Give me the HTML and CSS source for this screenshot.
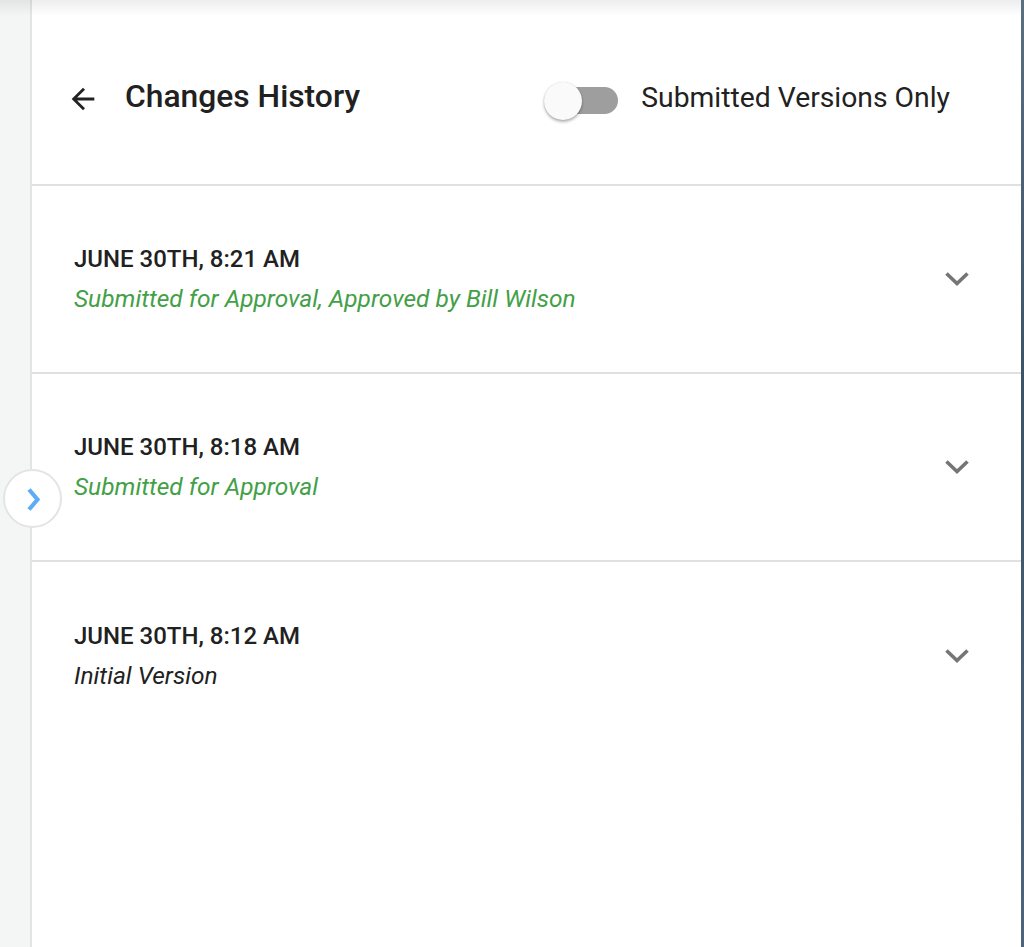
FILE: index.html
```html
<!DOCTYPE html>
<html>
<head>
<meta charset="utf-8">
<link rel="stylesheet" href="styles.css">
</head>
<body>
<div class="app">
  <aside class="rail"></aside>
  <main class="panel">
    <header class="head">
      <button class="back" aria-label="Back">
        <svg width="34" height="34" viewBox="0 0 24 24"><path d="M20 11H7.83l5.59-5.59L12 4l-8 8 8 8 1.41-1.41L7.83 13H20v-2z" fill="#222"/></svg>
      </button>
      <h1 class="title">Changes History</h1>
      <label class="toggle">
        <span class="track"><span class="thumb"></span></span>
        <span class="toggle-label">Submitted Versions Only</span>
      </label>
    </header>
    <ul class="list">
      <li class="item">
        <div class="info">
          <div class="date">JUNE 30TH, 8:21 AM</div>
          <div class="desc green">Submitted for Approval, Approved by Bill Wilson</div>
        </div>
        <svg class="chev" width="30" height="30" viewBox="0 0 30 30"><polyline points="4.5,9.5 15,19.5 25.5,9.5" fill="none" stroke="#757575" stroke-width="3.6"/></svg>
      </li>
      <li class="item">
        <div class="info">
          <div class="date">JUNE 30TH, 8:18 AM</div>
          <div class="desc green">Submitted for Approval</div>
        </div>
        <svg class="chev" width="30" height="30" viewBox="0 0 30 30"><polyline points="4.5,9.5 15,19.5 25.5,9.5" fill="none" stroke="#757575" stroke-width="3.6"/></svg>
      </li>
      <li class="item last">
        <div class="info">
          <div class="date">JUNE 30TH, 8:12 AM</div>
          <div class="desc">Initial Version</div>
        </div>
        <svg class="chev" width="30" height="30" viewBox="0 0 30 30"><polyline points="4.5,9.5 15,19.5 25.5,9.5" fill="none" stroke="#757575" stroke-width="3.6"/></svg>
      </li>
    </ul>
  </main>
  <div class="edge"></div>
  <button class="expand" aria-label="Expand">
    <svg width="30" height="30" viewBox="0 0 30 30"><polyline points="11,5.5 19.5,15.5 11,25.5" fill="none" stroke="#5eacf5" stroke-width="4.2"/></svg>
  </button>
  <div class="topshade"></div>
</div>
</body>
</html>
```

FILE: styles.css
```css
* { box-sizing: border-box; }
html, body { margin: 0; padding: 0; height: 100%; }
body {
  font-family: Roboto, "Liberation Sans", sans-serif;
  color: #212121;
  background: #fff;
}
.app {
  position: relative;
  display: flex;
  width: 1024px;
  height: 947px;
  overflow: hidden;
}
.rail {
  width: 32px;
  flex: none;
  background: #f4f6f5;
  border-right: 2px solid #e3e5e4;
}
.panel {
  flex: 1;
  background: #fff;
}
.edge {
  width: 3px;
  flex: none;
  background: linear-gradient(#5a6f80, #3c5366 40%, #4e6478);
}
.topshade {
  position: absolute;
  left: 0; right: 3px; top: 0;
  height: 16px;
  background: linear-gradient(rgba(0,0,0,0.07), rgba(0,0,0,0));
  pointer-events: none;
}
.head {
  height: 186px;
  display: flex;
  align-items: center;
  padding: 0 0 0 34px;
  border-bottom: 2px solid #e0e0e0;
}
.back {
  border: 0;
  background: none;
  padding: 0;
  width: 34px;
  height: 34px;
  margin-right: 25px;
  margin-top: 13px;
  cursor: pointer;
  flex: none;
}
.back svg { display: block; }
.title {
  margin: 8px 0 0 0;
  font-size: 31.8px;
  line-height: 38px;
  font-weight: 500;
  flex: 1;
}
.toggle {
  display: flex;
  align-items: center;
  margin-right: 71px;
  margin-top: 17px;
}
.track {
  position: relative;
  width: 70px;
  height: 27px;
  border-radius: 14px;
  background: #9e9e9e;
}
.thumb {
  position: absolute;
  left: -4px;
  top: -5.5px;
  width: 38px;
  height: 38px;
  border-radius: 50%;
  background: #fafafa;
  box-shadow: 0 2px 3px rgba(0,0,0,0.3), 0 0 1px rgba(0,0,0,0.2);
}
.toggle-label {
  font-size: 28.3px;
  line-height: 33px;
  margin-left: 23px;
  margin-bottom: 6px;
  color: #212121;
}
.list {
  list-style: none;
  margin: 0;
  padding: 0;
}
.item {
  height: 188px;
  display: flex;
  align-items: center;
  padding: 0 49px 0 42px;
  border-bottom: 2px solid #e0e0e0;
}
.item.last { border-bottom: 0; }
.info { flex: 1; }
.date {
  font-size: 24px;
  font-weight: 500;
  color: #212121;
  line-height: 28px;
}
.desc {
  font-size: 24.5px;
  font-style: italic;
  margin-top: 12px;
  line-height: 28px;
  color: #212121;
}
.desc.green { color: #43a047; }
.chev { flex: none; display: block; }
.expand {
  position: absolute;
  left: 3px;
  top: 469px;
  width: 59px;
  height: 59px;
  border-radius: 50%;
  background: #fff;
  border: 2px solid #e3e5e4;
  display: flex;
  align-items: center;
  justify-content: center;
  padding: 0;
}
.expand svg { display: block; }
```
